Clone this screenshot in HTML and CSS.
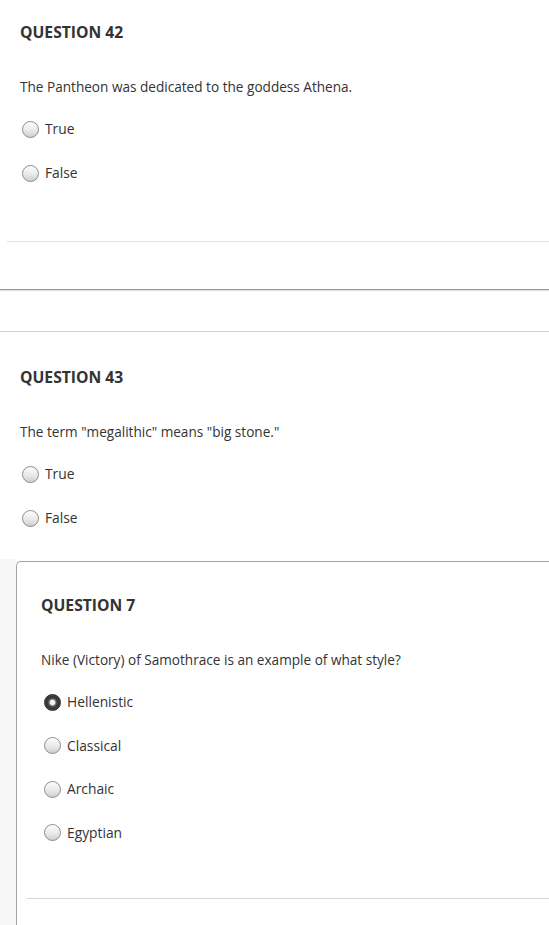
FILE: index.html
```html
<!DOCTYPE html>
<html>
<head>
<meta charset="utf-8">
<link rel="stylesheet" href="styles.css">
</head>
<body>
<div class="block first">
  <h2 class="qtitle">QUESTION 42</h2>
  <p class="qtext">The Pantheon was dedicated to the goddess Athena.</p>
  <ul class="opts">
    <li class="opt"><span class="radio"></span>True</li>
    <li class="opt"><span class="radio"></span>False</li>
  </ul>
  <div class="rule rule-first"></div>
</div>
<div class="spacer"></div>
<div class="block second">
  <h2 class="qtitle">QUESTION 43</h2>
  <p class="qtext">The term "megalithic" means "big stone."</p>
  <ul class="opts">
    <li class="opt"><span class="radio"></span>True</li>
    <li class="opt"><span class="radio"></span>False</li>
  </ul>
</div>
<div class="third">
  <div class="strip"></div>
  <div class="card">
    <h2 class="qtitle">QUESTION 7</h2>
    <p class="qtext">Nike (Victory) of Samothrace is an example of what style?</p>
    <ul class="opts tight">
      <li class="opt"><span class="radio checked"></span>Hellenistic</li>
      <li class="opt"><span class="radio"></span>Classical</li>
      <li class="opt"><span class="radio"></span>Archaic</li>
      <li class="opt"><span class="radio"></span>Egyptian</li>
    </ul>
    <div class="rule rule-card"></div>
  </div>
</div>
</body>
</html>
```
FILE: styles.css
```css
html, body {
  margin: 0;
  padding: 0;
  background: #fff;
  font-family: "Open Sans", "Liberation Sans", sans-serif;
  color: #333;
  overflow: hidden;
}
.block {
  padding-left: 20px;
}
.first {
  padding-top: 21px;
  padding-bottom: 47px;
  border-bottom: 1px solid #9a9a9a;
  box-shadow: 0 1px 1px rgba(0,0,0,0.12);
}
.spacer {
  height: 41px;
}
.second {
  border-top: 1px solid #cfcfcf;
  padding-top: 34px;
  padding-bottom: 31px;
}
.qtitle {
  margin: 0;
  font-size: 15.7px;
  line-height: 22px;
  font-weight: 700;
  color: #333;
}
.qtext {
  margin: 34px 0 0;
  font-size: 13.6px;
  line-height: 20px;
}
.opts {
  list-style: none;
  margin: 22px 0 0;
  padding: 0 0 0 2px;
  display: flex;
  flex-direction: column;
  gap: 24px;
}
.opts.tight {
  gap: 23.5px;
}
.opt {
  display: flex;
  align-items: center;
  gap: 6px;
  font-size: 13.8px;
  line-height: 20px;
}
.radio {
  width: 15px;
  height: 15px;
  border-radius: 50%;
  border: 1px solid #8c8c8c;
  background: linear-gradient(#fdfdfd, #e9e9e9 55%, #cfcfcf);
  flex: none;
}
.radio.checked {
  border-color: #2a2a2a;
  background: radial-gradient(circle, #f2f2f2 0 2.2px, #9a9a9a 3px, #555 4px, #333 5.5px, #444 7.5px);
}
.rule {
  height: 0;
  border-top: 1px solid #e2e2e2;
}
.rule-first {
  margin: 58px 0 0 -13px;
}
.third {
  display: flex;
  padding-top: 2px;
}
.strip {
  width: 16px;
  background: #f6f6f6;
  margin-top: -2px;
  flex: none;
}
.card {
  flex: 1;
  border: 1px solid #a3a3a3;
  border-right: none;
  border-top-left-radius: 5px;
  padding: 32px 0 40px 24px;
}
.card .opts {
  padding-left: 3px;
}
.rule-card {
  border-top-color: #d6d6d6;
  margin: 55px 0 0 -14px;
}
```
